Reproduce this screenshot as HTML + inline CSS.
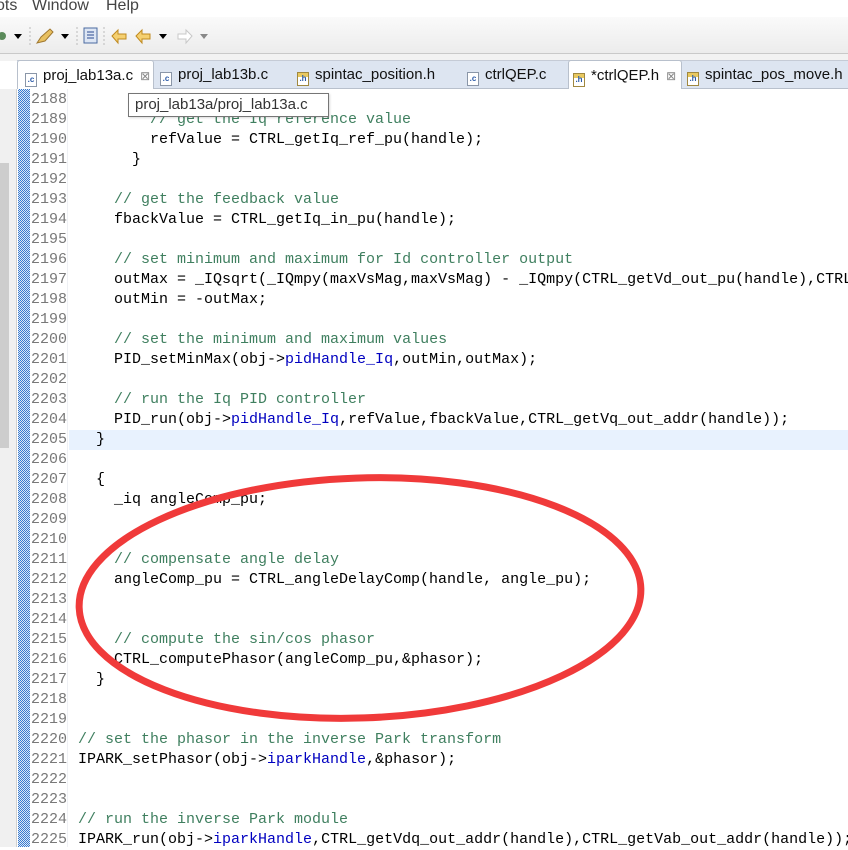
<!DOCTYPE html>
<html><head><meta charset="utf-8">
<style>
*{margin:0;padding:0;box-sizing:border-box}
body{width:848px;height:847px;overflow:hidden;background:#fff;position:relative;font-family:"Liberation Sans",sans-serif}
.abs{position:absolute}
#menu{left:0;top:0;width:848px;height:17px;background:#fff;font-size:16px;color:#444;line-height:14px}
#tool{left:0;top:17px;width:848px;height:37px;background:linear-gradient(#fafafa,#ececec);border-bottom:1px solid #c9c9c9}
#gap{left:0;top:54px;width:848px;height:7px;background:#f2f2f2}
#tabs{left:17px;top:60px;width:831px;height:29px;background:#dde5f1;border-top:1px solid #c5cbd6;border-bottom:1px solid #b8c0cc}
.tab{position:absolute;top:60px;height:29px;font-size:15px;color:#111;line-height:30px;white-space:nowrap}
.tab.act{background:#fff;border:1px solid #b8c0cc;border-bottom:none;border-radius:3px 3px 0 0}
.ic{display:inline-block;width:12px;height:14px;border:1px solid #8a96a8;background:#fff;font-size:8px;line-height:12px;color:#2b5aa8;font-weight:bold;text-align:center;vertical-align:-2px;margin-right:6px}
.ih{background:linear-gradient(#e8c860 0 4px,#fff 4px);border-color:#a08840}
.x{color:#888;font-size:12px;margin-left:7px}
#left{left:0;top:89px;width:17px;height:758px;background:#f0f0f0;border-right:1px solid #d0d0d0}
#thumb{left:0;top:163px;width:9px;height:285px;background:#cdcdcd}
#strip{left:18px;top:89px;width:12px;height:758px;background:repeating-conic-gradient(#3a7bd0 0 25%,#dce8f6 0 50%) 0 0/2px 2px}
#gut{left:30px;top:89px;width:38px;height:758px;background:#fff;border-right:1px solid #eef0f4}
#hl{left:69px;top:430px;width:779px;height:20px;background:#e8f2fe}
.ln{position:absolute;left:31px;font-family:"Liberation Mono",monospace;font-size:15px;color:#787878;line-height:20px}
.cl{position:absolute;left:78px;width:770px;overflow:hidden;font-family:"Liberation Mono",monospace;font-size:15px;color:#000;line-height:20px;white-space:pre}
.c{color:#3f7f5f}.f{color:#0000c0}
#tip{left:128px;top:93px;width:201px;height:24px;background:#fff;border:1px solid #767676;font-size:15px;color:#333;line-height:22px;padding-left:6px;box-shadow:1px 1px 2px rgba(0,0,0,.15)}
</style></head><body>
<div id="menu" class="abs"><span style="position:absolute;left:-4px;top:-1px">ots</span><span style="position:absolute;left:32px;top:-1px">Window</span><span style="position:absolute;left:106px;top:-1px">Help</span></div>
<div id="tool" class="abs">
<svg width="220" height="36" style="position:absolute;left:0;top:0">
<circle cx="2" cy="19" r="4" fill="#5a8a5a"/>
<path d="M14 17h8l-4 5z" fill="#000"/>
<line x1="30" y1="10" x2="30" y2="28" stroke="#bbb" stroke-dasharray="2 2"/>
<path d="M37 26l4-6 9-8 3 3-8 9z" fill="#e8c060" stroke="#a07830"/>
<path d="M61 17h8l-4 5z" fill="#000"/>
<line x1="77" y1="10" x2="77" y2="28" stroke="#bbb" stroke-dasharray="2 2"/>
<rect x="84" y="11" width="13" height="15" fill="#dde6f4" stroke="#4a6aa0"/>
<path d="M87 15h7M87 18h7M87 21h7" stroke="#2a4a90"/>
<line x1="104" y1="10" x2="104" y2="28" stroke="#bbb" stroke-dasharray="2 2"/>
<path d="M112 19l6-6v4h8v5h-8v4z" fill="#f5d070" stroke="#c08a20"/>
<path d="M136 19l6-6v4h8v5h-8v4z" fill="#f5d070" stroke="#c08a20"/>
<path d="M159 17h8l-4 5z" fill="#000"/>
<path d="M192 19l-6-6v4h-8v5h8v4z" fill="#fff" stroke="#c8c8c8"/>
<path d="M200 17h8l-4 5z" fill="#888"/>
</svg></div>
<div id="gap" class="abs"></div>
<div id="tabs" class="abs"></div>
<div class="tab act" style="left:17px;width:137px;padding-left:7px"><span class="ic">.c</span>proj_lab13a.c<span class="x">⊠</span></div>
<div class="tab" style="left:160px;padding-left:0"><span class="ic">.c</span>proj_lab13b.c</div>
<div class="tab" style="left:297px"><span class="ic ih">.h</span>spintac_position.h</div>
<div class="tab" style="left:467px"><span class="ic">.c</span>ctrlQEP.c</div>
<div class="tab act" style="left:568px;width:114px;padding-left:4px"><span class="ic ih">.h</span>*ctrlQEP.h<span class="x">⊠</span></div>
<div class="tab" style="left:687px"><span class="ic ih">.h</span>spintac_pos_move.h</div>
<div id="left" class="abs"></div>
<div id="thumb" class="abs"></div>
<div id="strip" class="abs"></div>
<div id="gut" class="abs"></div>
<div id="hl" class="abs"></div>

<div class="ln" style="top:90px">2188<br>2189<br>2190<br>2191<br>2192<br>2193<br>2194<br>2195<br>2196<br>2197<br>2198<br>2199<br>2200<br>2201<br>2202<br>2203<br>2204<br>2205<br>2206<br>2207<br>2208<br>2209<br>2210<br>2211<br>2212<br>2213<br>2214<br>2215<br>2216<br>2217<br>2218<br>2219<br>2220<br>2221<br>2222<br>2223<br>2224<br>2225</div>

<div class="cl" style="top:90px"> 
        <span class="c">// get the Iq reference value</span>
        refValue = CTRL_getIq_ref_pu(handle);
      }

    <span class="c">// get the feedback value</span>
    fbackValue = CTRL_getIq_in_pu(handle);

    <span class="c">// set minimum and maximum for Id controller output</span>
    outMax = _IQsqrt(_IQmpy(maxVsMag,maxVsMag) - _IQmpy(CTRL_getVd_out_pu(handle),CTRL_getVd_out_pu(handle)));
    outMin = -outMax;

    <span class="c">// set the minimum and maximum values</span>
    PID_setMinMax(obj-><span class="f">pidHandle_Iq</span>,outMin,outMax);

    <span class="c">// run the Iq PID controller</span>
    PID_run(obj-><span class="f">pidHandle_Iq</span>,refValue,fbackValue,CTRL_getVq_out_addr(handle));
  }

  {
    _iq angleComp_pu;


    <span class="c">// compensate angle delay</span>
    angleComp_pu = CTRL_angleDelayComp(handle, angle_pu);


    <span class="c">// compute the sin/cos phasor</span>
    CTRL_computePhasor(angleComp_pu,&amp;phasor);
  }


<span class="c">// set the phasor in the inverse Park transform</span>
IPARK_setPhasor(obj-><span class="f">iparkHandle</span>,&amp;phasor);


<span class="c">// run the inverse Park module</span>
IPARK_run(obj-><span class="f">iparkHandle</span>,CTRL_getVdq_out_addr(handle),CTRL_getVab_out_addr(handle));</div>

<div id="tip" class="abs">proj_lab13a/proj_lab13a.c</div>

<svg class="abs" style="left:0;top:0" width="848" height="847">
<ellipse cx="360" cy="598" rx="281" ry="120" fill="none" stroke="#f03a3a" stroke-width="7" transform="rotate(-2 360 598)"/>
</svg>
</body></html>
